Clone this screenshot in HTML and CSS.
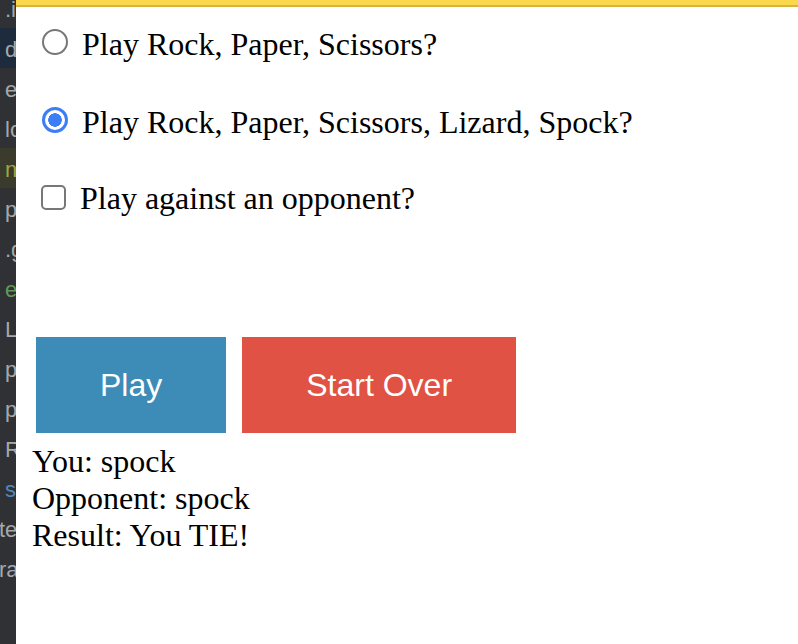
FILE: index.html
```html
<!DOCTYPE html>
<html lang="en">
<head>
<meta charset="utf-8">
<title>Rock Paper Scissors</title>
<link rel="stylesheet" href="styles.css">
</head>
<body>
  <aside class="editor">
    <div class="line">.i</div>
    <div class="line line-sel">d</div>
    <div class="line">e</div>
    <div class="line">lo</div>
    <div class="line line-warn"><span class="tok-olive">n</span></div>
    <div class="line">p</div>
    <div class="line">.g</div>
    <div class="line"><span class="tok-green">e</span></div>
    <div class="line">L</div>
    <div class="line">p</div>
    <div class="line">p</div>
    <div class="line">R</div>
    <div class="line"><span class="tok-blue">s</span></div>
    <div class="line line-flush">te</div>
    <div class="line line-flush">ra</div>
  </aside>
  <main class="page">
    <div class="topbar"></div>
    <div class="content">
      <div class="options">
        <label class="opt"><input type="radio" name="mode" class="radio"><span>Play Rock, Paper, Scissors?</span></label>
        <label class="opt"><input type="radio" name="mode" class="radio" checked><span>Play Rock, Paper, Scissors, Lizard, Spock?</span></label>
        <label class="opt opt-check"><input type="checkbox" class="check"><span>Play against an opponent?</span></label>
      </div>
      <div class="actions">
        <button class="btn btn-play">Play</button>
        <button class="btn btn-reset">Start Over</button>
      </div>
      <div class="results">
        <div>You: spock</div>
        <div>Opponent: spock</div>
        <div>Result: You TIE!</div>
      </div>
    </div>
  </main>
</body>
</html>
```
FILE: styles.css
```css
html, body {
  margin: 0;
  padding: 0;
  height: 100%;
}

body {
  display: flex;
  overflow: hidden;
  background: #ffffff;
  font-family: "Liberation Serif", "Times New Roman", serif;
  font-size: 32px;
  color: #000;
}

/* editor strip on the left */
.editor {
  width: 16px;
  flex: 0 0 16px;
  background: #303134;
  overflow: hidden;
  font-family: "Liberation Sans", Arial, sans-serif;
  font-size: 22px;
  color: #a6a7a9;
  white-space: nowrap;
}

.editor .line:first-child {
  margin-top: -12px;
}

.line {
  height: 36px;
  line-height: 36px;
  padding-top: 4px;
  padding-left: 5px;
}

.line-sel {
  background: #1d2b3d;
}

.line-warn {
  background: #3a3a2d;
}

.line-flush {
  padding-left: 0;
  text-indent: -1px;
}

.tok-olive { color: #a3a23f; }
.tok-green { color: #62985a; }
.tok-blue { color: #4f87b9; }

/* page */
.page {
  flex: 1;
  display: flex;
  flex-direction: column;
  min-width: 0;
}

.topbar {
  height: 5px;
  background: #fbd84b;
  border-bottom: 2px solid #d6b33c;
}

.content {
  padding-left: 16px;
}

.options {
  display: flex;
  flex-direction: column;
  padding-top: 19px;
}

.opt {
  display: block;
  white-space: nowrap;
}

.opt + .opt {
  margin-top: 41px;
}

.opt.opt-check {
  margin-top: 39px;
}

.radio {
  appearance: none;
  -webkit-appearance: none;
  box-sizing: border-box;
  width: 26px;
  height: 26px;
  margin: 0 14px 0 10px;
  border: 2px solid #777777;
  border-radius: 50%;
  background: #ffffff;
  vertical-align: baseline;
}

.radio:checked {
  border: 3px solid #3b7ef6;
  background: radial-gradient(circle, #3b7ef6 0 6.5px, #ffffff 7px);
}

.check {
  appearance: none;
  -webkit-appearance: none;
  box-sizing: border-box;
  width: 25px;
  height: 25px;
  margin: 0 14px 0 9px;
  border: 2px solid #777777;
  border-radius: 5px;
  background: #ffffff;
  vertical-align: -1px;
}

.actions {
  display: flex;
  gap: 16px;
  margin-top: 120px;
  padding-left: 4px;
}

.btn {
  height: 96px;
  padding: 0 64px;
  border: none;
  margin: 0;
  font-family: "Liberation Sans", Arial, sans-serif;
  font-size: 32px;
  color: #ffffff;
  cursor: pointer;
}

.btn-play {
  background: #3d8bb7;
}

.btn-reset {
  background: #e05244;
}

.results {
  margin-top: 10px;
  line-height: normal;
}
```
